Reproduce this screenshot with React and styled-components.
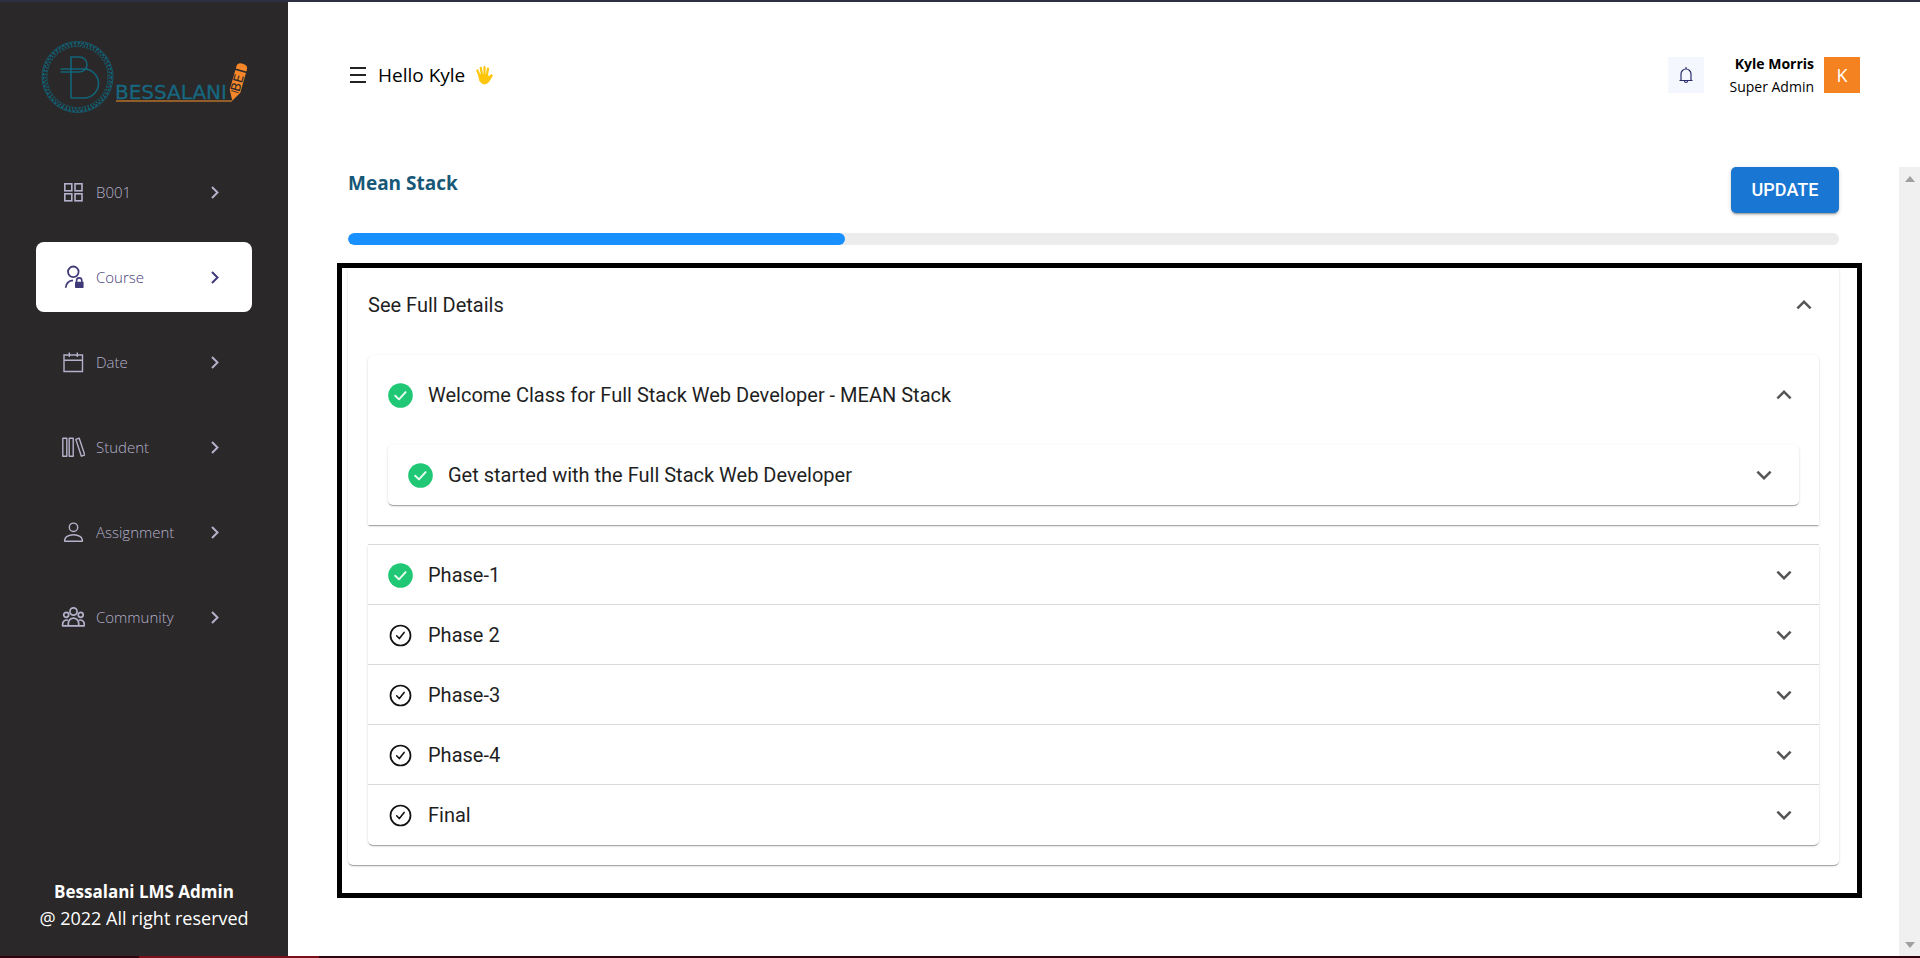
import React, { useState } from "react";
import styled, { createGlobalStyle, css } from "styled-components";

const sans = '"Open Sans", "Noto Sans", sans-serif';
const roboto = 'Roboto, "Liberation Sans", sans-serif';

const GlobalStyle = createGlobalStyle`
  *, *::before, *::after { box-sizing: border-box; }
  body { margin: 0; background: #fff; color: #000; font-family: ${sans}; }
  button { font: inherit; color: inherit; background: none; border: 0; padding: 0; cursor: pointer; }
  a { color: inherit; text-decoration: none; }
  svg { display: block; flex-shrink: 0; }
  h1, h2, p, ul { margin: 0; padding: 0; }
  li { list-style: none; }
`;

const Page = styled.div`
  display: flex;
  flex-direction: column;
  height: 100vh;
  border-top: 2px solid #2e3042;
`;

const Body = styled.div`
  display: flex;
  flex: 1;
  min-height: 0;
`;

const BottomStrip = styled.div`
  height: 2px;
  padding-left: 139px;
  background: #30040f;
  &::before { content: ""; display: block; width: 180px; height: 2px; background: #7a1019; }
`;

const Sidebar = styled.aside`
  display: flex;
  flex-direction: column;
  width: 288px;
  flex-shrink: 0;
  padding: 38px 36px 24px;
  background: #2a2828;
  color: #fff;
`;

const Logo = styled.a`
  display: block;
  margin-left: 4px;
  height: 117px;
`;

const NavList = styled.ul`
  display: flex;
  flex-direction: column;
  gap: 15px;
`;

const NavLink = styled.a`
  display: flex;
  align-items: center;
  height: 70px;
  padding: 0 29px 0 25px;
  border-radius: 8px;
  font-size: 15px;
  font-weight: 300;
  line-height: 20px;
  color: #b4b1cb;
  ${(p) => p.$active && css`background: #fff; color: #3f3a78;`}
  span { flex: 1; margin-left: 11px; }
`;

const SideFooter = styled.footer`
  margin-top: auto;
  text-align: center;
  white-space: nowrap;
  font-size: 18px;
  line-height: 27px;
  strong { font-size: 17px; }
`;

const Main = styled.main`
  display: flex;
  flex: 1;
  flex-direction: column;
  min-width: 0;
`;

const Header = styled.header`
  display: flex;
  align-items: center;
  height: 165px;
  flex-shrink: 0;
  padding: 0 60px 20px;
`;

const Greeting = styled.div`
  display: flex;
  align-items: center;
  gap: 10px;
  flex: 1;
  font-size: 19px;
  line-height: 28px;
`;

const BellButton = styled.button`
  display: grid;
  place-items: center;
  width: 36px;
  height: 36px;
  background: #f5f7ff;
  color: #2b2f6b;
`;

const UserText = styled.div`
  margin: 0 10px 0 25px;
  text-align: right;
  font-size: 14px;
  line-height: 23px;
`;

const Avatar = styled.div`
  display: grid;
  place-items: center;
  width: 36px;
  height: 36px;
  background: #f58220;
  color: #fff;
  font-size: 18px;
`;

const Scroller = styled.div`
  display: flex;
  flex: 1;
  min-height: 0;
`;

const Content = styled.div`
  flex: 1;
  min-width: 0;
  padding: 0 60px;
`;

const ScrollTrack = styled.div`
  display: flex;
  flex-direction: column;
  align-items: center;
  justify-content: space-between;
  width: 21px;
  padding: 9px 0 8px;
  background: #f0f0f0;
  color: #a0a0a0;
`;

const TitleRow = styled.div`
  display: flex;
  align-items: flex-start;
  justify-content: space-between;
`;

const Title = styled.h1`
  font-size: 19px;
  font-weight: 700;
  line-height: 32px;
  color: #175877;
`;

const UpdateButton = styled.button`
  min-width: 108px;
  height: 46px;
  padding: 0 20px;
  border-radius: 5px;
  background: #1976d2;
  color: #fff;
  font-family: ${roboto};
  font-size: 18px;
  font-weight: 500;
  line-height: 30px;
  box-shadow: 0 3px 1px -2px rgba(0, 0, 0, 0.2), 0 2px 2px rgba(0, 0, 0, 0.14), 0 1px 5px rgba(0, 0, 0, 0.12);
`;

const Progress = styled.div`
  height: 12px;
  margin: 20px 0;
  border-radius: 6px;
  background: #ececec;
  overflow: hidden;
`;

const ProgressFill = styled.div`
  height: 100%;
  border-radius: 6px;
  background: #1890ff;
`;

const Frame = styled.section`
  position: relative;
  &::after {
    content: "";
    position: absolute;
    inset: -2px -23px -33px -11px;
    border: 5px solid #000;
    pointer-events: none;
  }
`;

const Card = styled.div`
  border-radius: ${(p) => p.$radius || "5px"};
  background: #fff;
  box-shadow: 0 2px 1px -1px rgba(0, 0, 0, 0.2), 0 1px 1px rgba(0, 0, 0, 0.14), 0 1px 3px rgba(0, 0, 0, 0.12);
  & + & { margin-top: 20px; }
`;

const Details = styled.div`
  padding: 10px 20px 20px;
`;

const Summary = styled.button`
  display: flex;
  align-items: center;
  width: 100%;
  height: ${(p) => (p.$open ? "80px" : "60px")};
  padding: 0 20px;
  text-align: left;
  font-family: ${roboto};
  font-size: 20px;
  line-height: 30px;
  color: #1f1f1f;
  svg:first-child { margin-right: 15px; }
  span { flex: 1; }
`;

const PhaseRow = styled.div`
  box-shadow: 0 -1px 0 #d9d9d9;
`;

const Chevron = ({ dir = "down" }) => (
  <svg width="30" height="30" viewBox="0 0 24 24" fill="#555" aria-hidden="true">
    {dir === "down" ? (
      <path d="M16.59 8.59 12 13.17 7.41 8.59 6 10l6 6 6-6z" />
    ) : (
      <path d="m12 8-6 6 1.41 1.41L12 10.83l4.59 4.58L18 14z" />
    )}
  </svg>
);

const DoneIcon = () => (
  <svg width="25" height="25" viewBox="0 0 26 26" aria-hidden="true">
    <circle cx="13" cy="13" r="12.8" fill="#20c876" />
    <path d="M7.5 13.2 11.4 17 18.3 9.5" fill="none" stroke="#eafff2" strokeWidth="2" strokeLinecap="round" strokeLinejoin="round" />
  </svg>
);

const TodoIcon = () => (
  <svg width="25" height="25" viewBox="0 0 26 26" fill="none" stroke="#111" aria-hidden="true">
    <circle cx="13" cy="13" r="10.4" strokeWidth="1.8" />
    <path d="M9 13.2 11.8 16.2 16.8 9.8" strokeWidth="1.6" strokeLinecap="round" strokeLinejoin="round" />
  </svg>
);

const Accordion = ({ title, icon, defaultOpen, children }) => {
  const [open, setOpen] = useState(!!defaultOpen);
  return (
    <>
      <Summary type="button" $open={open && !!children} aria-expanded={open} onClick={() => setOpen(!open)}>
        {icon}
        <span>{title}</span>
        <Chevron dir={open ? "up" : "down"} />
      </Summary>
      {open && children && <Details>{children}</Details>}
    </>
  );
};

const NavIcon = ({ children }) => (
  <svg width="24" height="24" viewBox="0 0 24 24" fill="none" stroke="currentColor" strokeWidth="1.4" aria-hidden="true">
    {children}
  </svg>
);

const icons = {
  grid: (
    <g strokeWidth="1.6">
      <rect x="3.8" y="3.8" width="7" height="7" /><rect x="14" y="3.8" width="7" height="7" />
      <rect x="3.8" y="13.8" width="7" height="7" /><rect x="14" y="13.8" width="7" height="7" />
    </g>
  ),
  course: (
    <>
      <circle cx="12.3" cy="6.8" r="5.3" strokeWidth="1.8" />
      <path d="M4.700 22.800c.3-3.900 3-7 7.300-7.400" strokeWidth="1.800" />
      <path d="M15.600 17.500v-2a2.600 2.600 0 0 1 5.200 0v2" strokeWidth="1.600" />
      <rect x="14" y="16.800" width="8.600" height="6.200" rx="0.800" fill="currentColor" stroke="none" />
    </>
  ),
  date: <path d="M3 5h18.500v16.500H3zM3 10.200h18.500M8.300 2.500v4.500M16.300 2.500v4.500" strokeWidth="1.400" />,
  student: (
    <path d="M1.800 3.200h4v18h-4zM8.200 3.200h4v18h-4zM14.800 4.400l3.400-1.200L23.800 20l-3.400 1.200z" strokeWidth="1.400" strokeLinejoin="round" />
  ),
  person: (
    <>
      <circle cx="12.500" cy="7.300" r="4.200" />
      <path d="M3.600 21.200c-.3-4.300 4-6.500 8.900-6.500s9.200 2.200 8.900 6.500z" strokeLinejoin="round" />
    </>
  ),
  people: (
    <g strokeWidth="1.700" strokeLinejoin="round">
      <circle cx="12.500" cy="6.500" r="3.600" /><circle cx="5.200" cy="9.800" r="2.500" /><circle cx="19.700" cy="9.800" r="2.500" />
      <path d="M7.300 20.800v-2.500a5.200 5.200 0 0 1 10.400 0v2.500zM7 15.200c-3.200-.8-5.400 1.100-5.400 4v1.600h5.700M17.900 15.200c3.200-.8 5.400 1.100 5.400 4v1.600h-5.600" />
    </g>
  ),
};

const nav = [
  ["B001", "grid"], ["Course", "course"], ["Date", "date"],
  ["Student", "student"], ["Assignment", "person"], ["Community", "people"],
];

const LogoArt = () => (
  <svg width="212" height="76" viewBox="0 0 212 76" fill="none" role="img" aria-label="Bessalani">
    <g stroke="#12647a">
      <circle cx="37.500" cy="37" r="35.500" strokeWidth="0.800" />
      <circle cx="37.500" cy="37" r="34" strokeWidth="1.600" strokeDasharray="2.600 1.400" />
      <circle cx="37.500" cy="37" r="32" strokeWidth="1.600" strokeDasharray="1.400 1.800" />
      <circle cx="37.500" cy="37" r="30.500" strokeWidth="0.800" strokeDasharray="3 1" />
      <path d="M31 58V17h8.500a7.500 7.500 0 0 1 0 15H20.500M20.500 29H44a14.500 14.500 0 0 1 0 29H31" strokeWidth="1.600" />
    </g>
    <text x="75" y="59" fill="#176780" stroke="#176780" strokeWidth="0.300" fontFamily="DejaVu Sans, sans-serif" fontSize="20">BESSALANI</text>
    <path d="M76 61h116" stroke="#b5702a" strokeWidth="1.500" />
    <g transform="translate(197.500 42.500) rotate(16)">
      <path d="M-5.500-13v-2q0-4.500 5.500-4.500t5.500 4.500v2z" fill="#f5862a" />
      <path d="M-5.500-11.500h11V9L0 19l-5.500-10z" fill="#f5862a" />
      <path d="M-3.800 9.500h7.600" stroke="#2a2828" strokeWidth="0.800" />
      <text transform="rotate(-90)" x="-9" y="4.500" fill="#2a2828" fontFamily="DejaVu Sans, sans-serif" fontSize="13">BE</text>
    </g>
  </svg>
);

export default function App() {
  return (
    <>
      <GlobalStyle />
      <Page>
        <Body>
          <Sidebar>
            <Logo href="#"><LogoArt /></Logo>
            <nav>
              <NavList>
                {nav.map(([label, icon]) => (
                  <li key={label}>
                    <NavLink href="#" $active={label === "Course"}>
                      <NavIcon>{icons[icon]}</NavIcon>
                      <span>{label}</span>
                      <svg width="16" height="16" viewBox="0 0 16 16" fill="none" stroke="currentColor" strokeWidth="2" aria-hidden="true">
                        <path d="m5 3 5.500 5.500L5 14" />
                      </svg>
                    </NavLink>
                  </li>
                ))}
              </NavList>
            </nav>
            <SideFooter>
              <p><strong>Bessalani LMS Admin</strong></p>
              <p>@ 2022 All right reserved</p>
            </SideFooter>
          </Sidebar>
          <Main>
            <Header>
              <Greeting>
                <button type="button" aria-label="Toggle menu">
                  <svg width="20" height="20" viewBox="0 0 20 20" stroke="#222" strokeWidth="1.800">
                    <path d="M2 3h16M2 10h16M2 17h16" />
                  </svg>
                </button>
                <span>Hello Kyle</span>
                <svg width="18" height="20" viewBox="0 0 18 20" fill="none" stroke="#fdc60b" strokeLinecap="round" aria-hidden="true">
                  <path d="M4.800 11 2.300 5.500M7 9.500 5.700 2.800M9.500 9.500V2M12 9.500l1-6" strokeWidth="2.200" />
                  <path d="M4 9.500h8.500l1 2.500 3-2.500q1.500.5.300 2.200L13.500 17q-3.500 3.500-7 .8Q3.500 15.500 4 9.500z" fill="#fdc60b" strokeWidth="1" />
                </svg>
              </Greeting>
              <BellButton type="button" aria-label="Notifications">
                <svg width="18" height="18" viewBox="0 0 18 18" fill="none" stroke="currentColor" strokeWidth="1.200">
                  <path d="M2.500 14.500h13M4 14.500V8a5 5 0 0 1 10 0v6.500M9 1v2M7.500 15a1.500 1.500 0 0 0 3 0" />
                </svg>
              </BellButton>
              <UserText>
                <p><strong>Kyle Morris</strong></p>
                <p>Super Admin</p>
              </UserText>
              <Avatar>K</Avatar>
            </Header>
            <Scroller>
              <Content>
                <TitleRow>
                  <Title>Mean Stack</Title>
                  <UpdateButton type="button">UPDATE</UpdateButton>
                </TitleRow>
                <Progress role="progressbar" aria-label="Course progress" aria-valuenow={33} aria-valuemin={0} aria-valuemax={100}>
                  <ProgressFill style={{ width: `${100 / 3}%` }} />
                </Progress>
                <Frame>
                  <Card>
                    <Accordion title="See Full Details" defaultOpen>
                      <Card $radius="5px 5px 0 0">
                        <Accordion title="Welcome Class for Full Stack Web Developer - MEAN Stack" icon={<DoneIcon />} defaultOpen>
                          <Card>
                            <Accordion title="Get started with the Full Stack Web Developer" icon={<DoneIcon />} />
                          </Card>
                        </Accordion>
                      </Card>
                      <Card $radius="0 0 5px 5px">
                        {["Phase-1", "Phase 2", "Phase-3", "Phase-4", "Final"].map((name, i) => (
                          <PhaseRow key={name}>
                            <Accordion title={name} icon={i === 0 ? <DoneIcon /> : <TodoIcon />} />
                          </PhaseRow>
                        ))}
                      </Card>
                    </Accordion>
                  </Card>
                </Frame>
              </Content>
              <ScrollTrack aria-hidden="true">
                <svg width="10" height="6" viewBox="0 0 10 6" fill="currentColor"><path d="M0 6 5 0l5 6z" /></svg>
                <svg width="10" height="6" viewBox="0 0 10 6" fill="currentColor"><path d="M0 0h10L5 6z" /></svg>
              </ScrollTrack>
            </Scroller>
          </Main>
        </Body>
        <BottomStrip />
      </Page>
    </>
  );
}
